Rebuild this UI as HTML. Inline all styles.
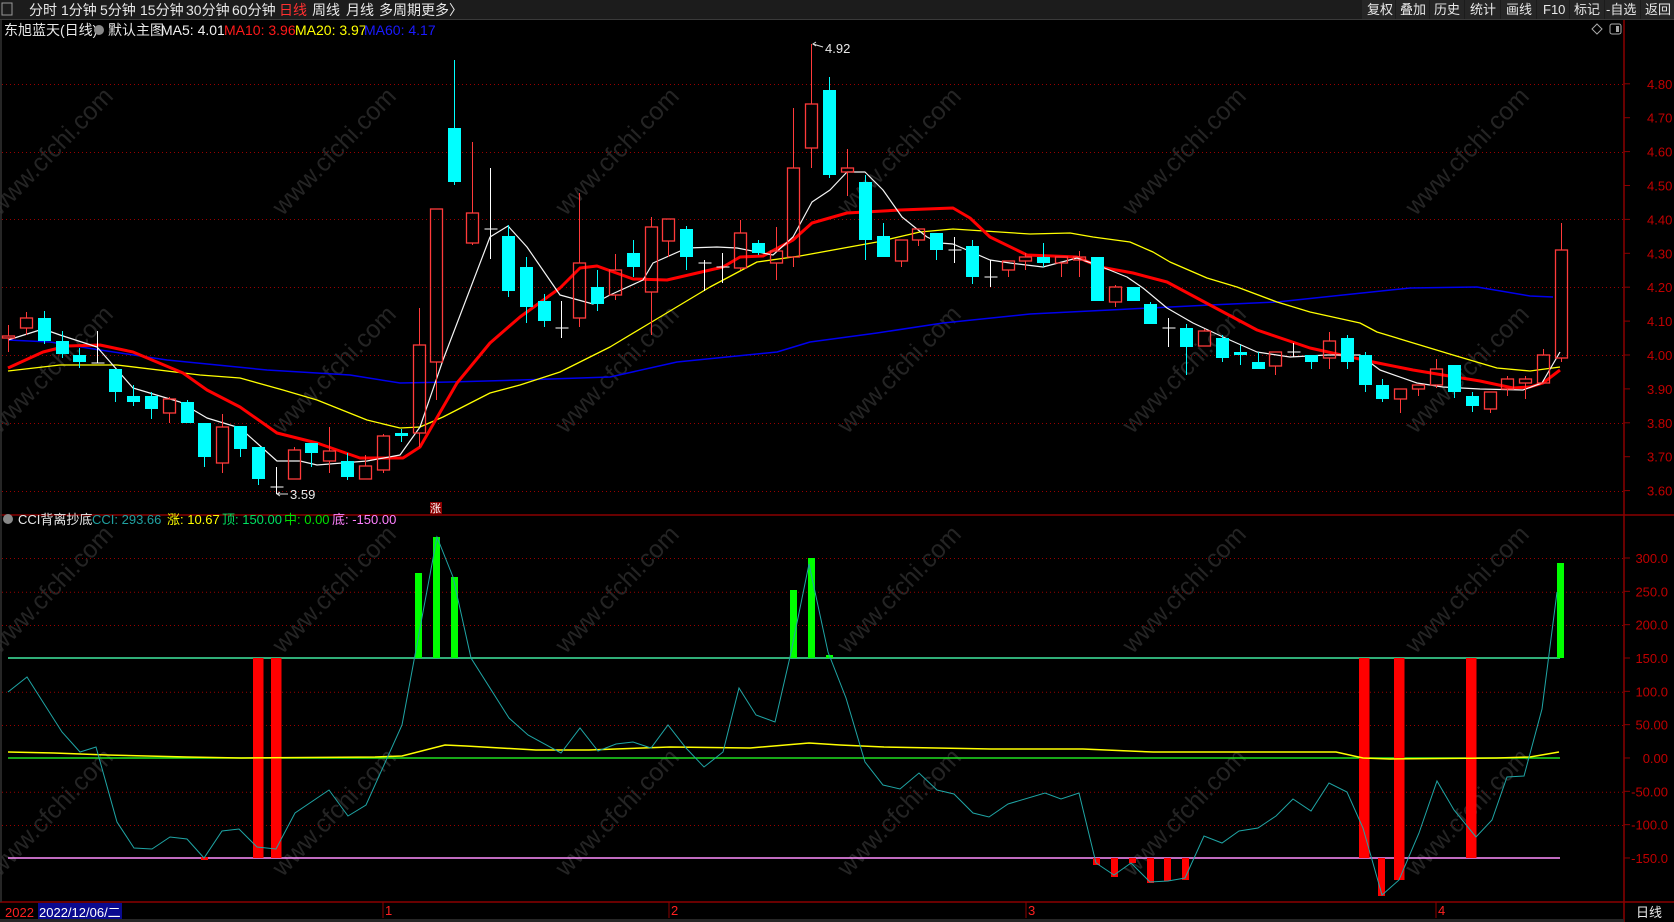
<!DOCTYPE html>
<html><head><meta charset="utf-8"><style>
html,body{margin:0;padding:0;background:#000;width:1674px;height:922px;overflow:hidden}
svg{display:block}
text{font-family:"Liberation Sans","Noto Sans CJK SC",sans-serif}
</style></head><body>
<svg id="s" width="1674" height="922" xmlns="http://www.w3.org/2000/svg">
<rect width="1674" height="922" fill="#000"/>
<!-- top bar -->
<rect x="0" y="0" width="1674" height="19" fill="#1c1c1c"/>
<line x1="0" y1="19.5" x2="1674" y2="19.5" stroke="#3a3a3a"/>
<rect x="2" y="3" width="10" height="12" fill="none" stroke="#999" stroke-width="1"/>
<g font-size="14" fill="#e8e8e8">
<text x="29" y="15">分时</text><text x="61" y="15">1分钟</text><text x="100" y="15">5分钟</text><text x="140" y="15">15分钟</text><text x="186" y="15">30分钟</text><text x="232" y="15">60分钟</text><text x="279" y="15" fill="#ff3030">日线</text><text x="312" y="15">周线</text><text x="346" y="15">月线</text><text x="379" y="15">多周期</text><text x="421" y="15">更多〉</text>
</g>
<g fill="#262626">
<rect x="1362" y="0" width="33" height="19"/><rect x="1396" y="0" width="33" height="19"/><rect x="1430" y="0" width="34" height="19"/><rect x="1465" y="0" width="35" height="19"/><rect x="1501" y="0" width="35" height="19"/><rect x="1537" y="0" width="32" height="19"/><rect x="1570" y="0" width="34" height="19"/><rect x="1605" y="0" width="35" height="19"/><rect x="1641" y="0" width="33" height="19"/>
</g>
<g font-size="13" fill="#e8e8e8">
<text x="1367" y="14">复权</text><text x="1400" y="14">叠加</text><text x="1434" y="14">历史</text><text x="1470" y="14">统计</text><text x="1506" y="14">画线</text><text x="1543" y="14">F10</text><text x="1574" y="14">标记</text><text x="1606" y="14">-自选</text><text x="1645" y="14">返回</text>
</g>
<!-- title row 2 -->
<g font-size="14">
<text x="4" y="35" fill="#e8e8e8">东旭蓝天(日线)</text>
<circle cx="99" cy="30" r="5" fill="#888"/>
<text x="108" y="35" fill="#e8e8e8">默认主图</text>
<text x="161" y="35" fill="#f0f0f0">MA5: 4.01</text>
<text x="224" y="35" fill="#ff1a1a">MA10: 3.96</text>
<text x="295" y="35" fill="#ffff00">MA20: 3.97</text>
<text x="364" y="35" fill="#1a1aff">MA60: 4.17</text>
</g>
<path d="M1597 24 L1602 29 L1597 34 L1592 29 Z" fill="none" stroke="#aaa"/>
<rect x="1610" y="24" width="11" height="10" rx="2" fill="none" stroke="#aaa"/><rect x="1616" y="26" width="3" height="6" fill="#aaa"/>
<!-- watermarks -->
<g id="wm" font-size="25" fill="#242424"></g>
<!-- grids -->
<g id="grid" stroke="#9a0000" stroke-dasharray="1 3" stroke-width="1"></g>
<!-- borders -->
<g stroke="#8b0000" stroke-width="1.5">
<line x1="1624" y1="20" x2="1624" y2="922"/>
<line x1="0" y1="515" x2="1674" y2="515"/>
<line x1="0" y1="902" x2="1674" y2="902"/>
<line x1="1" y1="20" x2="1" y2="902" stroke="#333"/>
</g>
<g id="axis" font-size="13" fill="#c00000"></g>
<!-- MA lines -->
<g fill="none" stroke-linejoin="round">
<polyline stroke="#0000ee" stroke-width="1.5" points="8,340 50,342 100,350 167,360 267,370 350,375 400,383 450,382 520,380 610,377 677,362 777,352 810,342 877,333 943,323 1030,314 1110,310 1210,305 1277,302 1343,295 1410,288 1477,287 1530,296 1553,297"/>
<polyline stroke="#ffff00" stroke-width="1.3" points="8,371 60,365 117,365 200,375 240,378 283,390 317,400 367,420 400,428 420,427 443,417 490,393 520,385 560,372 610,347 650,323 710,287 757,262 800,256 877,242 920,232 953,229 1030,234 1070,233 1093,237 1130,242 1153,252 1170,262 1207,278 1237,287 1277,302 1310,312 1360,323 1377,332 1410,342 1453,355 1480,363 1497,368 1530,371 1560,367"/>
<polyline stroke="#ff0000" stroke-width="3" points="8,368 43,352 67,346 100,345 133,352 183,373 207,390 240,407 277,433 317,443 360,458 403,458 420,447 457,383 490,343 520,317 560,288 580,268 597,266 633,279 667,280 723,267 740,257 763,256 793,240 812,223 847,213 900,210 953,208 970,218 990,237 1027,255 1077,257 1100,267 1133,273 1167,282 1210,305 1257,330 1310,348 1373,362 1413,370 1443,375 1480,381 1513,388 1530,387 1543,383 1560,370"/>
<polyline stroke="#f4f4f4" stroke-width="1.2" points="8,340 43,329 60,335 97,347 133,388 180,402 207,418 240,428 277,461 300,461 317,465 367,461 400,455 420,427 443,360 490,237 508,226 527,247 560,295 593,304 610,295 643,280 653,263 687,248 717,247 737,248 773,255 793,237 812,202 830,190 847,172 865,172 883,190 902,217 927,237 940,243 953,244 990,260 1010,263 1043,267 1077,258 1097,265 1127,277 1143,288 1167,308 1193,323 1223,337 1257,352 1290,357 1327,355 1360,355 1380,370 1417,383 1443,387 1480,389 1523,390 1542,383 1560,352"/>
</g>
<g id="candles"></g>
<!-- extremes -->
<g stroke="#ddd" fill="none" stroke-width="1"><path d="M813 44 L823 47"/><path d="M816 42 L813 44 L816 46"/><path d="M277 494 L288 494"/><path d="M280 492 L277 494 L280 496"/></g>
<text x="825" y="53" font-size="13" fill="#e8e8e8">4.92</text>
<text x="290" y="499" font-size="13" fill="#e8e8e8">3.59</text>
<rect x="430" y="502" width="12" height="12" fill="#8b0000"/><text x="430" y="512" font-size="11" fill="#fff">涨</text>
<!-- CCI panel -->
<g font-size="13">
<circle cx="8" cy="519" r="5" fill="#888"/>
<text x="18" y="524" fill="#e8e8e8">CCI背离抄底</text>
<text x="92" y="524" fill="#20a0a0">CCI: 293.66</text>
<text x="167" y="524" fill="#ffff00">涨: 10.67</text>
<text x="222" y="524" fill="#00e060">顶: 150.00</text>
<text x="284" y="524" fill="#00e000">中: 0.00</text>
<text x="332" y="524" fill="#ff80ff">底: -150.00</text>
</g>
<g id="cci"></g>
<!-- date axis -->
<g font-size="13">
<text x="5" y="917" fill="#ff2020">2022</text>
<rect x="38" y="903" width="84" height="16" fill="#0a0a90"/>
<text x="39" y="917" fill="#fff">2022/12/06/二</text>
<g stroke="#8b0000"><line x1="383" y1="902" x2="383" y2="918"/><line x1="669" y1="902" x2="669" y2="918"/><line x1="1026" y1="902" x2="1026" y2="918"/><line x1="1436" y1="902" x2="1436" y2="918"/></g>
<text x="385" y="915" fill="#ff2020">1</text><text x="671" y="915" fill="#ff2020">2</text><text x="1028" y="915" fill="#ff2020">3</text><text x="1438" y="915" fill="#ff2020">4</text>
<text x="1636" y="917" fill="#e8e8e8">日线</text>
</g>
<rect x="0" y="919" width="1624" height="3" fill="#262626"/>
</svg>
<script>
var NS="http://www.w3.org/2000/svg";
function el(p,t,a,txt){var e=document.createElementNS(NS,t);for(var k in a)e.setAttribute(k,a[k]);if(txt)e.textContent=txt;document.getElementById(p).appendChild(e);return e;}
[57,340,623,905,1190,1473].forEach(function(x){[157,375,595,818].forEach(function(y){el("wm","text",{x:x,y:y,"text-anchor":"middle",transform:"rotate(-46 "+x+" "+y+")"},"www.cfchi.com");});});
[84,152,219,287,355,423,491].forEach(function(y){el("grid","line",{x1:2,y1:y+.5,x2:1624,y2:y+.5});});
[558,591.7,625,691.7,725,791.7,825].forEach(function(y){el("grid","line",{x1:2,y1:y+.5,x2:1624,y2:y+.5});});
for(var i=0;i<13;i++){var p=4.8-i*0.1,y=355-(p-4)*339;el("axis","line",{x1:1624,y1:y,x2:1630,y2:y,stroke:"#8b0000"});el("axis","text",{x:1647,y:y+5},p.toFixed(2));}
var cl=["300.0","250.0","200.0","150.0","100.0","50.00","0.00","-50.00","-100.0","-150.0"];
cl.forEach(function(t,i){var y=558+i*33.33;el("axis","line",{x1:1624,y1:y,x2:1630,y2:y,stroke:"#8b0000"});el("axis","text",{x:1668,y:y+5,"text-anchor":"end"},t);});
var C=[["r",336,338,325,352],["r",318,328,312,335],["c",318,341,311,344],["c",341,354,331,358],["c",355,362,348,368],["w",363,363,331,363],["c",369,392,369,402],["c",396,402,385,406],["c",396,409,392,419],["r",399,413,397,423],["c",402,423,400,423],["c",423,457,423,467],["r",427,463,414,473],["c",426,449,426,457],["c",447,479,447,485],["w",487,487,467,494],["r",450,479,447,479],["c",443,453,443,467],["r",451,461,427,473],["c",461,477,453,480],["r",466,479,455,479],["r",436,470,434,473],["c",433,436,429,442],["r",345,433,308,447],["r",209,362,209,400],["c",128,182,60,185],["r",213,243,142,245],["w",229,229,168,259],["c",236,291,225,297],["c",267,307,257,323],["c",301,321,294,327],["w",328,328,301,338],["r",263,318,193,327],["c",287,304,270,311],["r",270,295,254,300],["c",253,267,240,277],["r",227,292,217,335],["r",219,241,219,257],["c",229,257,226,270],["w",263,263,260,291],["w",267,267,253,283],["r",233,268,220,270],["c",243,253,240,255],["r",251,263,227,280],["r",168,257,108,267],["r",104,148,44,168],["c",90,175,77,178],["r",168,172,149,196],["c",182,240,175,260],["c",236,257,223,257],["r",240,261,240,267],["r",229,240,229,246],["c",233,250,233,260],["w",250,250,237,263],["c",246,277,240,284],["w",277,277,260,287],["r",261,270,261,277],["r",257,261,253,270],["c",257,263,243,267],["r",257,263,257,277],["r",257,260,251,277],["c",257,301,257,301],["r",287,302,285,307],["c",287,301,287,301],["c",304,324,302,324],["w",328,328,318,347],["c",328,347,324,375],["r",331,346,329,346],["c",338,358,335,362],["c",352,355,345,365],["c",362,369,352,369],["r",352,366,352,375],["w",352,352,343,357],["c",355,362,355,369],["r",341,358,332,369],["c",338,362,335,369],["c",355,385,352,392],["c",385,399,379,402],["r",389,399,389,413],["r",385,389,385,396],["r",369,385,359,388],["c",365,392,365,398],["c",396,406,392,412],["r",392,409,392,413],["r",379,389,376,396],["r",379,383,376,399],["r",355,383,349,383],["r",250,358,223,362]];
C.forEach(function(d,i){var x=Math.round(8+i*17.85)+.5,t=d[0],bt=d[1],bb=d[2],h=d[3],l=d[4];
 if(t=="r"){el("candles","line",{x1:x,y1:h,x2:x,y2:bt,stroke:"#ff3a3a"});el("candles","line",{x1:x,y1:bb,x2:x,y2:l,stroke:"#ff3a3a"});el("candles","rect",{x:x-6,y:bt,width:12,height:Math.max(bb-bt,1),fill:"none",stroke:"#ff3a3a","stroke-width":1.3});}
 else if(t=="c"){el("candles","line",{x1:x,y1:h,x2:x,y2:l,stroke:"#00ffff"});el("candles","rect",{x:x-6.5,y:bt,width:13,height:Math.max(bb-bt,3),fill:"#00ffff"});}
 else{el("candles","line",{x1:x,y1:h,x2:x,y2:l,stroke:"#fff"});el("candles","line",{x1:x-6,y1:bt,x2:x+7,y2:bt,stroke:"#fff"});}
});
function r(x,y,w,h,f){el("cci","rect",{x:x,y:y,width:w,height:h,fill:f});}
el("cci","line",{x1:8,y1:658,x2:1560,y2:658,stroke:"#40e8a0","stroke-width":1.5});
el("cci","line",{x1:8,y1:758,x2:1560,y2:758,stroke:"#20e020","stroke-width":1.5});
el("cci","line",{x1:8,y1:858,x2:1560,y2:858,stroke:"#ff90ff","stroke-width":1.5});
[[253,858],[271,858],[1359,858],[1394,880],[1466,858]].forEach(function(b){r(b[0],658,10.5,b[1]-658,"#ff0000");});
[[1093,865],[1111,877],[1129,863],[1147,883],[1164,881],[1182,880],[1378,896]].forEach(function(b){r(b[0],858,7,b[1]-858,"#ff0000");});
r(201,857,7,3,"#ff0000");
[[415,573],[433,537],[451,577],[790,590],[808,558],[826,655],[1557,563]].forEach(function(b){r(b[0],b[1],7,658-b[1],"#00ff00");});
el("cci","polyline",{fill:"none",stroke:"#ffff00","stroke-width":1.5,points:"8,752 54,753 107,755 187,757 241,758 375,757 402,756 445,745 466,746 536,750 589,750 670,747 750,748 809,743 840,745 884,747 991,749 1083,749 1153,752 1314,752 1336,752 1363,758 1390,759 1497,758 1530,757 1559,752"});
el("cci","polyline",{fill:"none",stroke:"#1fa5a5","stroke-width":1,points:"8,692 27,677 62,732 80,752 96,747 117,822 134,848 152,849 170,837 187,839 204,858 222,831 239,829 257,847 276,849 295,813 329,790 348,816 366,805 402,725 415,655 437,537 453,577 471,658 509,718 528,735 561,753 580,728 598,751 616,744 633,742 651,748 668,725 686,748 704,767 723,752 739,688 756,715 775,722 790,657 809,564 828,652 846,698 865,762 883,785 900,789 919,773 937,790 954,794 973,813 989,817 1008,804 1045,793 1061,799 1079,793 1096,863 1114,875 1131,863 1150,882 1168,881 1185,878 1204,836 1222,843 1239,831 1258,828 1276,816 1293,799 1311,811 1329,783 1347,792 1363,828 1382,895 1399,880 1419,833 1437,781 1454,810 1476,837 1492,820 1507,777 1524,776 1542,709 1557,592"});
</script>
</body></html>
